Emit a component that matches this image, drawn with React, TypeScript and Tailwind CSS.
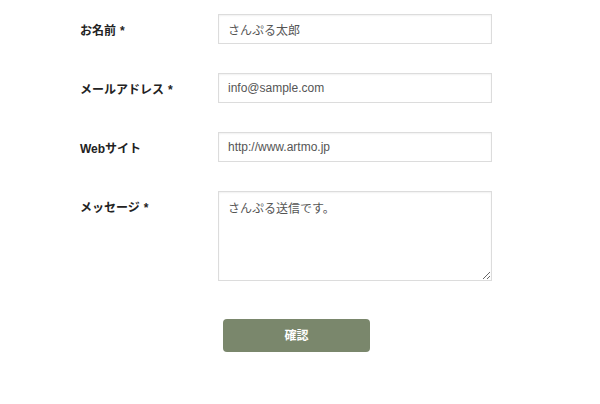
import { useState } from "react"

const fields = [
  { label: "お名前", required: true, value: "さんぷる太郎" },
  { label: "メールアドレス", required: true, value: "info@sample.com" },
  { label: "Webサイト", required: false, value: "http://www.artmo.jp" },
]

export default function App() {
  const [values, setValues] = useState(fields.map(f => f.value))
  const [message, setMessage] = useState("さんぷる送信です。")

  return (
    <div className="w-[600px] h-[404px] bg-white pl-[80px] pt-[14px] font-['Liberation_Sans','Noto_Sans_CJK_JP',sans-serif] text-[#222]">
      {fields.map((f, i) => (
        <div key={f.label} className="flex mb-[29px]">
          <label className="w-[138px] pt-[10px] text-[12px] leading-[14px] font-bold">
            {f.label}{f.required && <span className="ml-1">*</span>}
          </label>
          <input
            value={values[i]}
            onChange={e => setValues(values.map((v, j) => (j === i ? e.target.value : v)))}
            className="w-[274px] h-[30px] border border-[#dcdcdc] px-[9px] text-[12px] text-[#555] shadow-[inset_0_1px_2px_rgba(0,0,0,0.06)] outline-none"
          />
        </div>
      ))}
      <div className="flex">
        <label className="w-[138px] pt-[10px] text-[12px] leading-[14px] font-bold">
          メッセージ<span className="ml-1">*</span>
        </label>
        <textarea
          value={message}
          onChange={e => setMessage(e.target.value)}
          className="w-[274px] h-[90px] border border-[#dcdcdc] px-[9px] py-[9px] text-[12px] leading-[16px] text-[#555] shadow-[inset_0_1px_2px_rgba(0,0,0,0.06)] outline-none"
        />
      </div>
      <div className="ml-[143px] mt-[38px]">
        <button className="w-[147px] h-[33px] rounded-[4px] bg-[#7a876c] text-white text-[12px] font-bold">
          確認
        </button>
      </div>
    </div>
  )
}
